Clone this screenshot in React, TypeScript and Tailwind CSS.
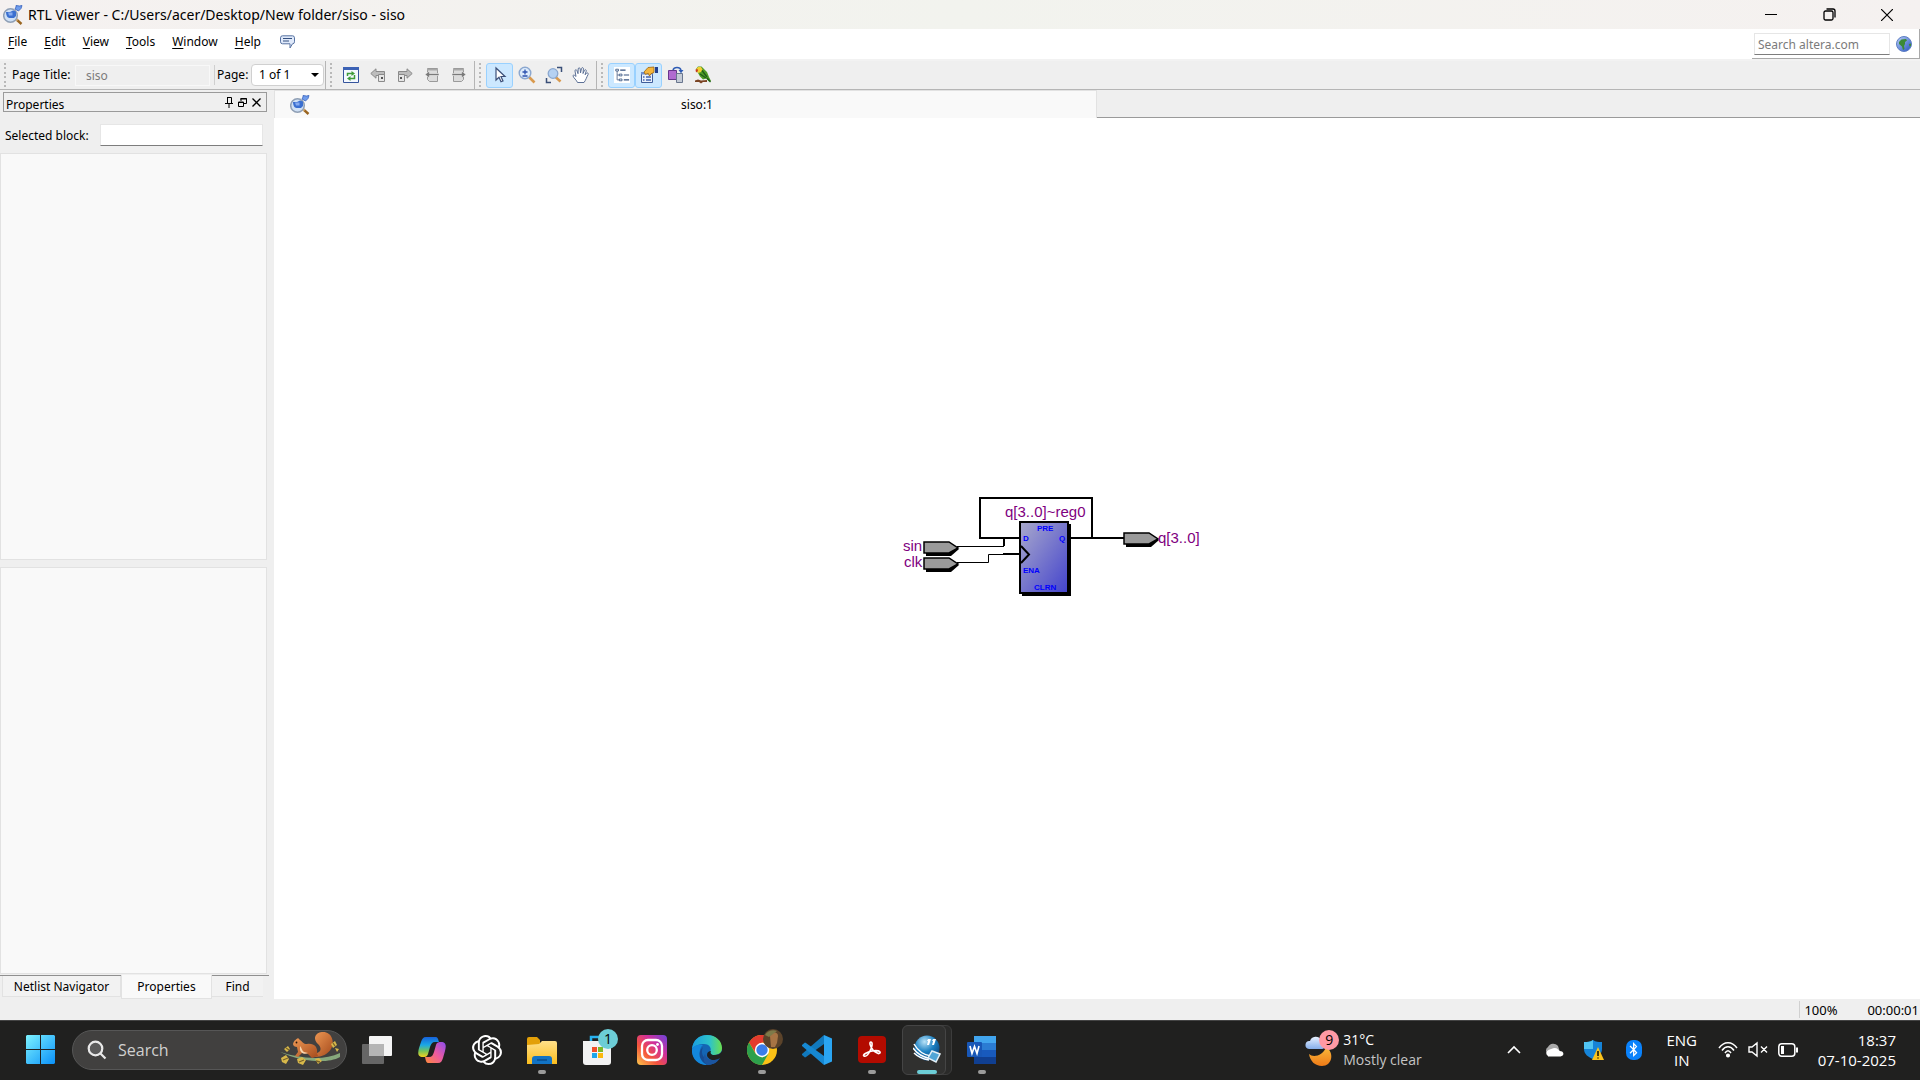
import React, { ReactNode } from "react";
import { SiOpenai } from "react-icons/si";
import { FaBluetoothB } from "react-icons/fa";

const Magnifier = () => (
  <svg width="20" height="20" viewBox="0 0 20 20">
    <path d="M13.500 14.500l5 4.500" stroke="#9a6520" strokeWidth="2.400" />
    <path d="M12 13.500l2.500 2" stroke="#d9b27c" strokeWidth="2" />
    <circle cx="7.500" cy="10.500" r="6.800" fill="#cfe0f5" stroke="#8f9fb5" strokeWidth="1.500" />
    <path d="M3 7h4l3-1.500 3 1V11l-2 2H6.500C4.500 13 3 10 3 7z" fill="#3a6fd0" />
    <path d="M5 7.500h4.500v3H6z" fill="#84aaf0" />
    <path d="M12 4l1-2V.500l3.500.5 2.500-.500-1 3-2.500 2.500z" fill="#6f9cec" stroke="#3560bb" strokeWidth=".8" />
  </svg>
);

const Grip = () => (
  <span className="mx-1 flex h-6 w-[3px] shrink-0 flex-col justify-between" aria-hidden="true">
    {[0, 1, 2, 3, 4, 5].map((i) => (
      <span key={i} className="size-[2px] bg-[#b9b9b9]" />
    ))}
  </span>
);

const ToolButton = ({ label, on, children }: { label: string; on?: boolean; children: ReactNode }) => (
  <button
    aria-label={label}
    className={
      on
        ? "flex h-[25px] w-[27px] items-center justify-center rounded-[3px] border border-[#99d1ff] bg-[#cce8ff]"
        : "flex h-[25px] w-[27px] items-center justify-center"
    }
  >
    {children}
  </button>
);

const Refresh = () => (
  <svg width="16" height="16" viewBox="0 0 16 16">
    <path d="M.5.500h15v15H.5z" fill="#f4f8ff" stroke="#35549c" />
    <path d="M0 0h16v3H0z" fill="#3c62b5" />
    <path d="M4.500 9V6.500H10M11.500 8v3.500H6" fill="none" stroke="#3f9c3b" strokeWidth="1.500" />
    <path d="M8.500 4l3.500 2.500L8.500 9zM7.500 9L4 11.500 7.500 14z" fill="#3f9c3b" />
  </svg>
);
const PageArrow = ({ flip }: { flip?: boolean }) => (
  <svg width="16" height="16" viewBox="0 0 16 16" className={flip ? "-scale-x-100" : ""}>
    <path d="M.8 6.500L6 1.800v2.700h8.500v4H6v2.700z" fill="#bdbdbd" stroke="#8a8a8a" />
    <path d="M8.500 7.500h6v7h-6z" fill="#e6e6e6" stroke="#8a8a8a" />
    <path d="M11 10h2v2h-2z" fill="#555" />
  </svg>
);
const SheetArrow = ({ flip }: { flip?: boolean }) => (
  <svg width="16" height="16" viewBox="0 0 16 16" className={flip ? "-scale-x-100" : ""}>
    <path d="M3.500 1.500h10v13h-8l-2-2z" fill="#dcdcdc" stroke="#9a9a9a" />
    <path d="M3 2h11v1.500H3z" fill="#a8a8a8" />
    <path d="M1 7.500L5.500 4v2.500H15v2H5.500V11z" fill="#7a7a7a" stroke="#efefef" strokeWidth=".6" />
  </svg>
);
const Pointer = () => (
  <svg width="14" height="18" viewBox="0 0 14 18">
    <path d="M3 2v12l3-2.800 2 4.600 2-.9-2-4.400h4z" fill="#fff" stroke="#3c4f78" strokeWidth="1.200" />
  </svg>
);
const ZoomLens = () => (
  <svg width="18" height="18" viewBox="0 0 18 18">
    <path d="M11 11l5.500 5.500" stroke="#d99a4e" strokeWidth="2.600" />
    <circle cx="7" cy="7" r="5.800" fill="#dcebfb" stroke="#8ba7cf" strokeWidth="1.400" />
    <path d="M4.500 6h5M7 3.500v5M4.500 10h5" stroke="#2b50ae" strokeWidth="1.300" />
  </svg>
);
const ZoomFit = () => (
  <svg width="18" height="18" viewBox="0 0 18 18">
    <path d="M10.500 11l5 4.500" stroke="#d99a4e" strokeWidth="2.600" />
    <circle cx="8" cy="7.500" r="4.800" fill="#b5d1f2" stroke="#8ba7cf" strokeWidth="1.300" />
    <path d="M12 1.500h4.500V6M1.500 12v4.500H6" fill="none" stroke="#3a4f78" strokeWidth="1.500" />
  </svg>
);
const Hand = () => (
  <svg width="18" height="18" viewBox="0 0 18 18">
    <path
      d="M5.500 16.500c-.5-2-4.500-5-4.500-6.700 0-1 1.500-1 3 .7L3 5c-.2-1.500 1.500-1.800 2-.3l1 3L6.200 3c0-1.600 1.900-1.600 2 0l.3 4L9.500 2.500c.4-1.400 2-1.100 1.900.4L11 7.500l1.500-3.200c.7-1.200 2.100-.5 1.700.9L13 8.700l1.700-1.500c1-.7 2 .2 1.400 1.300-1.300 2-2.100 5.500-4.100 8z"
      fill="#fff"
      stroke="#5d7196"
    />
  </svg>
);
const Tree = () => (
  <svg width="16" height="16" viewBox="0 0 18 18">
    <path d="M0 0h18v18H0z" fill="#fff" />
    <path d="M3.500 4v10.500H7M3.500 9H7" fill="none" stroke="#5c6f92" />
    <path d="M2 2.500h3v2H2zM6 8h3v2H6zM6 13.500h3v2H6z" fill="#fff" stroke="#34507f" strokeWidth=".9" />
    <path d="M7 3.500h6M11 9h6M11 14.500h6" stroke="#34507f" strokeWidth="1.400" />
  </svg>
);
const HandSheet = () => (
  <svg width="18" height="18" viewBox="0 0 18 18">
    <path d="M1.500 6.500h11v10h-11z" fill="#eaf1fc" stroke="#3f5d9a" />
    <path d="M1 6h12v2.500H1z" fill="#6f8fd0" />
    <path d="M3 11h1.500M6 11h5M3 14h1.500M6 14h5" stroke="#4363ad" strokeWidth="1.300" />
    <path d="M4 6l4-4.500L14 1v5.500l-3 1.200L9.500 10 8.300 7.500l-3 .8z" fill="#f5b53c" stroke="#9b650e" strokeWidth=".8" />
    <path d="M15 1h3v6h-3z" fill="#24408e" />
  </svg>
);
const Swap = () => (
  <svg width="18" height="18" viewBox="0 0 18 18">
    <path d="M1.500 4.500h8v9h-8z" fill="#b16bd0" stroke="#68348c" />
    <path d="M9.500 7.500h6v9h-6z" fill="#c4cbd6" stroke="#69768e" />
    <path d="M6 4c1-3.500 7-3.500 8 0" fill="none" stroke="#2f5cb4" strokeWidth="1.500" />
    <path d="M11.500 4h5L14 7.200z" fill="#2f5cb4" />
  </svg>
);
const Parrot = () => (
  <svg width="18" height="18" viewBox="0 0 18 18">
    <path d="M1 14.500l3-1 3 1 6-.5v2H9l-2 1.500-2-1.500H1z" fill="#7a4424" />
    <path d="M2 3l2-2.500h3.500l2 2L13 6l2 5 2 4-2 .5-3-3-3 1-3-3L4 7z" fill="#4f9b26" />
    <path d="M2 3.500L4 1h3l1.500 2.500L7 6l-3 1-1-2z" fill="#f2cf33" />
    <path d="M1.500 3.500l2-.5.500 2-2 1.500z" fill="#c33b20" />
    <path d="M8 4.500l5 6.500M6 8l6 4M13 12l3.500 4" stroke="#1d5d17" strokeWidth="1.300" />
  </svg>
);
const Globe = () => (
  <svg width="16" height="16" viewBox="0 0 16 16">
    <defs>
      <linearGradient id="gl" x1="0" y1="0" x2="1" y2="1">
        <stop offset="0" stopColor="#bcd3f7" />
        <stop offset="1" stopColor="#2450c0" />
      </linearGradient>
    </defs>
    <circle cx="8" cy="8" r="7.500" fill="url(#gl)" stroke="#5d7ec4" />
    <path d="M3 6l2.500-2.500L10 3l1 1.500L9 6v2l-1 2 .5 3-1.500 1-1-3.500L3 8zM13 8l2-.5V10l-1.500.5z" fill="#3c8a35" />
  </svg>
);

const Menu = ({ text }: { text: string }) => (
  <button className="text-black">
    <span className="underline underline-offset-2">{text[0]}</span>
    {text.slice(1)}
  </button>
);

const Pin = ({ x, y }: { x: number; y: number }) => (
  <g>
    <path d={`M${x + 2} ${y + 3}h24l9 4-8 7h-25z`} fill="#000" />
    <path d={`M${x} ${y}h25l9 6-9 5h-25z`} fill="#9a9a9a" stroke="#000" strokeWidth="1.500" />
  </g>
);

const Schematic = () => (
  <svg width="340" height="130" className="absolute left-[606px] top-[362px]" fontFamily="'Liberation Sans', Arial, sans-serif">
    <defs>
      <linearGradient id="reg" x1="0" y1="0" x2="1" y2="1">
        <stop offset="0" stopColor="#a9a9cc" />
        <stop offset="1" stopColor="#4343cc" />
      </linearGradient>
    </defs>
    <g fill="none" stroke="#000" strokeWidth="2">
      <path d="M140 58h-40V18h112v40M190 58h54M124 58v8M123 74h17" />
      <path d="M77 66.500h47M77 82.500h31.500v-8H124" strokeWidth="1" />
    </g>
    <path d="M142 44h49v72h-49z" />
    <path d="M140 42h48v71h-48z" fill="url(#reg)" stroke="#000" strokeWidth="2" />
    <path d="M141 66l8 8.500-8 8.500" fill="none" stroke="#000" strokeWidth="2" />
    <Pin x={44} y={62} />
    <Pin x={44} y={78} />
    <Pin x={244} y={53} />
    <g fill="#800080" fontSize="15">
      <text x="23" y="71">sin</text>
      <text x="24" y="87">clk</text>
      <text x="125" y="37">q[3..0]~reg0</text>
      <text x="278" y="63">q[3..0]</text>
    </g>
    <g fill="#0000ff" fontSize="8" fontWeight="700">
      <text x="157" y="51">PRE</text>
      <text x="143" y="61">D</text>
      <text x="179" y="61">Q</text>
      <text x="143" y="93">ENA</text>
      <text x="154" y="110">CLRN</text>
    </g>
  </svg>
);

const Task = ({ label, mark, children }: { label: string; mark?: boolean; children: ReactNode }) => (
  <button aria-label={label} className="relative flex h-full w-[54px] grow items-center justify-center">
    {children}
    {mark && <span className="absolute bottom-1 h-1 w-2 rounded-full bg-[#9b9b9b]" />}
  </button>
);

const Squirrel = () => (
  <svg width="64" height="36" viewBox="0 0 64 36">
    <defs>
      <linearGradient id="sq" x1="0" y1="0" x2="1" y2="1">
        <stop offset="0" stopColor="#f09a55" />
        <stop offset="1" stopColor="#a44a1c" />
      </linearGradient>
    </defs>
    <path d="M2 20c16 5 42 10 60 1v4c-12 7-36 4-50-1z" fill="#86a87c" />
    <path d="M35 22c9-1 9-6 5-10-6-6-2-12 5-12 9 0 12 10 8 17-3 5-9 8-16 8z" fill="url(#sq)" />
    <path d="M15 12c1-4 4-5 5-6l2 2c3 2 3 4 7 4 7-1 11 3 10 9l1 3-6 2-4-4-6-1-4 4-3-1 3-4-1-5c-2 0-4-1-4-3z" fill="url(#sq)" />
    <path d="M22 14c2 2 2 5 4 6l4 1c-4 2-7 0-8-3z" fill="#f8d5ae" />
    <circle cx="18.500" cy="10.500" r=".9" fill="#2a1408" />
    <g fill="#d8b84a">
      <path d="M6 17l4-3 2 3-3 3zM3 26l5-3 3 4-3 5-4-2zM19 27l5-2 4 3-3 5-5-2zM37 27l4-1 3 3-4 3zM53 12l4-3 2 4-4 3zM57 16l4 1-2 3z" />
    </g>
    <path d="M5 28l5-2M21 30l5-2M38 29l4 1M8 16l3 2M55 11l2 3" stroke="#77622a" strokeWidth="1.300" />
  </svg>
);

const Defs = () => (
  <svg width="0" height="0" className="absolute" aria-hidden="true">
    <defs>
      <linearGradient id="win" x1="0" y1="0" x2="1" y2="1"><stop offset="0" stopColor="#7df3ff" /><stop offset="1" stopColor="#0a90f8" /></linearGradient>
      <linearGradient id="ig" x1="0" y1="1" x2="1" y2="0"><stop offset="0" stopColor="#fdc84b" /><stop offset=".35" stopColor="#f4553c" /><stop offset=".65" stopColor="#d12f9a" /><stop offset="1" stopColor="#6a45dd" /></linearGradient>
      <linearGradient id="fold" x1="0" y1="0" x2="0" y2="1"><stop offset="0" stopColor="#ffe08a" /><stop offset="1" stopColor="#fbbd1d" /></linearGradient>
      <linearGradient id="edge" x1="0" y1="0" x2="1" y2="0"><stop offset="0" stopColor="#1a9de0" /><stop offset=".6" stopColor="#2ec3c9" /><stop offset="1" stopColor="#6be04e" /></linearGradient>
      <linearGradient id="cpa" x1="0" y1="0" x2="0" y2="1"><stop offset="0" stopColor="#1762dc" /><stop offset=".4" stopColor="#1ba8e6" /><stop offset=".7" stopColor="#74c45a" /><stop offset="1" stopColor="#f6d21e" /></linearGradient>
      <linearGradient id="cpb" x1="1" y1="0" x2="0" y2="1"><stop offset="0" stopColor="#8a4df0" /><stop offset=".5" stopColor="#ec5aa0" /><stop offset="1" stopColor="#ff8a3a" /></linearGradient>
      <linearGradient id="moon" x1="0" y1="0" x2="0" y2="1"><stop offset="0" stopColor="#f9ba3c" /><stop offset="1" stopColor="#ee7a17" /></linearGradient>
      <linearGradient id="cloud" x1="0" y1="0" x2="0" y2="1"><stop offset="0" stopColor="#e6f0ff" /><stop offset="1" stopColor="#86aeea" /></linearGradient>
      <radialGradient id="ball" cx=".4" cy=".25" r=".8"><stop offset="0" stopColor="#b8e2f7" /><stop offset=".5" stopColor="#1b80c2" /><stop offset="1" stopColor="#0a4077" /></radialGradient>
    </defs>
  </svg>
);

const Taskbar = () => (
  <footer className="flex h-[60px] shrink-0 items-center border-t border-[#444] bg-[#20201f] pb-0.5 font-['Open_Sans','Noto_Sans',sans-serif] text-white">
    <Defs />
    <button aria-label="Start" className="ml-[26px]">
      <svg width="29" height="29" viewBox="0 0 29 29">
        <path d="M1 0h13v14H0V1zM15 0h13l1 1v13H15zM0 15h14v14H1l-1-1zM15 15h14v13l-1 1H15z" fill="url(#win)" />
      </svg>
    </button>
    <label className="ml-[17px] flex h-10 w-[275px] items-center overflow-hidden rounded-full border border-[#565656] bg-[#41403f] pl-3.5 pr-1">
      <svg width="20" height="20" viewBox="0 0 20 20" fill="none" stroke="#e8e8e8" strokeWidth="2.200">
        <circle cx="8.500" cy="8.500" r="6.800" fill="#5b5b5b" />
        <path d="M13.500 13.500l5 5" />
      </svg>
      <input aria-label="Search" placeholder="Search" className="ml-[11px] w-0 grow bg-transparent text-base outline-none placeholder:text-[#d0d0d0]" />
      <Squirrel />
    </label>
    <nav className="ml-0.5 flex h-full w-[660px]">
      <Task label="Task view">
        <svg width="30" height="28" viewBox="0 0 30 28">
          <rect x="7" width="23" height="20" rx="1" fill="#f4f4f4" />
          <rect y="8" width="22" height="20" rx="1" fill="#666" />
          <path d="M7 8h15v12H7z" fill="#b5b5b5" />
        </svg>
      </Task>
      <Task label="Copilot">
        <svg width="28" height="26" viewBox="0 0 28 26">
          <path d="M8 0h9c3 0 3 2 4 5h-4c-3 0-4 2-5 5l-2 7c-1 3-3 3-5 3-6 0-5-5-4-9l2-6c1-3 2-5 5-5z" fill="url(#cpa)" />
          <path d="M20 26h-9c-3 0-3-2-4-6h4c3 0 4-2 5-5l2-7c1-3 3-3 5-3 6 0 5 5 4 9l-2 7c-1 3-2 5-5 5z" fill="url(#cpb)" />
        </svg>
      </Task>
      <Task label="ChatGPT"><SiOpenai size={30} color="#fff" /></Task>
      <Task label="File Explorer" mark>
        <svg width="30" height="28" viewBox="0 0 30 28">
          <path d="M0 3a2 2 0 012-2h8l3 3v6H0z" fill="#e3a008" />
          <path d="M0 9l12-1 3-3h13a2 2 0 012 2v21H0z" fill="url(#fold)" />
          <path d="M5 28v-5a3 3 0 013-3h14a3 3 0 013 3v5z" fill="#1273c4" />
          <path d="M10 24h10" stroke="#0a4c8c" strokeWidth="1.500" />
        </svg>
      </Task>
      <Task label="Microsoft Store">
        <svg width="28" height="30" viewBox="0 0 28 30">
          <path d="M8 7V2h12v5" fill="none" stroke="#27b1ef" strokeWidth="2.500" />
          <path d="M0 6h28v21a3 3 0 01-3 3H3a3 3 0 01-3-3z" fill="#f2f2f2" />
          <path d="M9 12h5v5H9z" fill="#f1502a" /><path d="M15 12h5v5h-5z" fill="#7db928" />
          <path d="M9 18h5v5H9z" fill="#1ca6ec" /><path d="M15 18h5v5h-5z" fill="#fbb80c" />
        </svg>
        <span className="absolute left-[29px] top-[8px] flex size-5 items-center justify-center rounded-full bg-[#6ccdd6] text-sm text-black">1</span>
      </Task>
      <Task label="Instagram">
        <svg width="30" height="30" viewBox="0 0 30 30">
          <rect width="30" height="30" rx="4" fill="url(#ig)" />
          <g fill="none" stroke="#fff" strokeWidth="2.300"><rect x="5" y="5" width="20" height="20" rx="6" /><circle cx="15" cy="15" r="4.800" /></g>
          <circle cx="20.500" cy="9.500" r="1.400" fill="#fff" />
        </svg>
      </Task>
      <Task label="Edge">
        <svg width="30" height="30" viewBox="0 0 30 30">
          <circle cx="15" cy="15" r="15" fill="#1465b4" />
          <path d="M0 14C1 5 7 0 15 0c9 0 15 6 15 13 0 5-4 7-8 7-3 0-5-1-4-3 2-3 0-8-6-8-5 0-10 2-12 5z" fill="url(#edge)" />
          <path d="M0 14c2-4 7-5 11-4-4 3-5 11 1 17 2 2 4 3 5 3C7 31-1 24 0 14z" fill="#1387dc" />
          <path d="M11 12c-4 9 4 15 11 13l5-1c-3 4-7 6-12 6-8-4-10-13-4-18z" fill="#164b93" />
          <path d="M19 16c-1 2 0 4 3 4 4 0 6-1 8-4v8l-2 1c-8 2-13-2-13-5 0-3 2-4 4-4z" fill="#20201f" />
          <path d="M13 19c1 6 8 8 15 4-3 5-8 7-13 7-4-3-4-8-2-11z" fill="#1b559f" />
        </svg>
      </Task>
      <Task label="Chrome" mark>
        <svg width="30" height="30" viewBox="0 0 30 30">
          <circle cx="15" cy="15" r="15" fill="#fbc116" />
          <path d="M2 7.500A15 15 0 0128 7.500H15L9 18.500z" fill="#e33b2e" />
          <path d="M2 7.500A15 15 0 0015 30l6.500-11.500-6.500 4-6.500-4z" fill="#2da04c" />
          <circle cx="15" cy="15" r="7.200" fill="#fff" /><circle cx="15" cy="15" r="5.700" fill="#3b7de9" />
        </svg>
        <svg width="20" height="20" viewBox="0 0 20 20" className="absolute left-[29px] top-[8px]">
          <circle cx="10" cy="10" r="10" fill="#5b432a" /><path d="M7 7c0-5 8-5 8 0l-1 7-2 4H8z" fill="#a77444" /><path d="M2 6c2-4 8-6 12-4L6 8z" fill="#7d7a49" />
        </svg>
      </Task>
      <Task label="Visual Studio Code">
        <svg width="30" height="30" viewBox="0 0 30 30">
          <path d="M22 0v9L4 22l-1 .5-3-2.500v-1L22 0z" fill="#1179bd" />
          <path d="M22 30v-9L4 8l-1-.5L0 10v1z" fill="#1688d2" />
          <path d="M22 0l8 3.500v23L22 30z" fill="#2aa5f2" />
        </svg>
      </Task>
      <Task label="Acrobat" mark>
        <svg width="28" height="27" viewBox="0 0 28 27">
          <rect width="28" height="27" rx="4" fill="#b30b00" />
          <path d="M6 20c-2-1 3-4 8-5 5-1 9 0 8 2-1 1-4 0-7-3-3-4-4-8-2-8s1 6-1 9c-2 4-4 6-6 5z" fill="none" stroke="#fff" strokeWidth="1.600" />
        </svg>
      </Task>
      <Task label="Quartus">
        <span className="absolute right-[2px] top-[4px] h-[50px] w-8 rounded-md border border-[#3c3c3c] bg-[#2a2a29]" />
        <span className="absolute left-[3px] top-[4px] h-[50px] w-11 rounded-md border border-[#454545] bg-[#30302f]" />
        <svg width="28" height="29" viewBox="0 0 28 29" className="relative">
          <circle cx="14" cy="13" r="12.500" fill="url(#ball)" />
          <path d="M1 9c4 7 9 11 17 12M0 13c4 6 9 9 17 10.500M1 18c4 4 9 6 15 7" fill="none" stroke="#fff" strokeWidth="1.500" />
          <path d="M19 16l8 3-4 8-8-4z" fill="#51a5d6" stroke="#e2eef5" strokeWidth="1.500" />
          <path d="M15 4h3l-2 6h-2l1-4h-1zM20 4h3l-2 6h-2l1-4h-1z" fill="#fff" />
        </svg>
        <span className="absolute bottom-1 h-1 w-5 rounded-full bg-[#6ccdd6]" />
      </Task>
      <Task label="Word" mark>
        <svg width="29" height="28" viewBox="0 0 29 28">
          <path d="M7 0h22v7H7z" fill="#41a5ee" /><path d="M7 7h22v7H7z" fill="#2b7cd3" /><path d="M7 14h22v7H7z" fill="#185abd" /><path d="M7 21h22v7H7z" fill="#103f91" />
          <rect y="6" width="15" height="15" rx="1" fill="#1857b7" />
          <path d="M3 10l2 7.500 2.500-7 2.500 7 2-7.500" fill="none" stroke="#fff" strokeWidth="1.600" />
        </svg>
      </Task>
    </nav>
    <button className="ml-auto mr-[72px] flex items-center text-left text-[14px] leading-5">
      <span className="relative mr-0.5 size-9">
        <svg width="36" height="36" viewBox="0 0 36 36">
          <path d="M4 22c4 4 14 2 17-7 9 6 6 19-4 19-7 0-12-5-13-12z" fill="url(#moon)" />
          <path d="M4 17a4 4 0 011-8 6 6 0 0111-1c5 1 5 9 1 9z" fill="url(#cloud)" />
        </svg>
        <span className="absolute right-0.5 -top-0.5 flex size-5 items-center justify-center rounded-full bg-[#ff99a4] text-sm text-black">9</span>
      </span>
      <span>
        <span className="block">31°C</span>
        <span className="block text-[#c5c5c5]">Mostly clear</span>
      </span>
    </button>
    <div className="flex h-full items-center">
      <button aria-label="Show hidden icons" className="flex w-10 justify-center">
        <svg width="14" height="9" viewBox="0 0 14 9" fill="none" stroke="#fff" strokeWidth="1.600"><path d="M1 8l6-6 6 6" /></svg>
      </button>
      <button aria-label="OneDrive" className="flex w-10 justify-center">
        <svg width="20" height="14" viewBox="0 0 20 14"><path d="M4 11a4 4 0 010-7 6 6 0 0110-1l2 6z" fill="#a9a9a9" /><path d="M4 13a4 3.500 0 01.5-6c3-1 4-2 6-2 3 0 4 2 5 3 5 0 5 5 1 5.500H4z" fill="#fff" /></svg>
      </button>
      <button aria-label="Security" className="flex w-10 justify-center">
        <svg width="20" height="20" viewBox="0 0 20 20"><path d="M9 0c3 2 5 2 9 2v7c0 5-4 8-9 10C4 17 0 14 0 9V2c4 0 6 0 9-2z" fill="#1684d8" /><path d="M9 0v9H0V2c4 0 6 0 9-2z" fill="#50c4f2" /><path d="M14 7l6 13H8z" fill="#fbc31c" /><path d="M14 11v5M14 17.500v1" stroke="#000" strokeWidth="1.400" /></svg>
      </button>
      <button aria-label="Bluetooth" className="flex w-10 justify-center">
        <span className="flex h-5 w-4 items-center justify-center rounded-[7px] bg-[#0a82fb]"><FaBluetoothB size={15} /></span>
      </button>
      <button className="w-[56px] text-center text-[15px] leading-5">ENG<br />IN</button>
      <button aria-label="Network, sound and battery" className="ml-2 flex items-center gap-2.5">
        <svg width="20" height="17" viewBox="0 0 20 17" fill="none" stroke="#fff" strokeWidth="1.500"><path d="M1 7c5-7 13-7 18 0M4 9.500c3.500-5 8.500-5 12 0M7 12c2-3 4-3 6 0" /><circle cx="10" cy="14.500" r="1.300" fill="#fff" /></svg>
        <svg width="20" height="17" viewBox="0 0 20 17" fill="none" stroke="#fff" strokeWidth="1.400"><path d="M1 6h3l5-4v13l-5-4H1zM13 5.500l6 6M19 5.500l-6 6" /></svg>
        <svg width="20" height="14" viewBox="0 0 20 14"><rect x=".8" y=".8" width="16" height="12.400" rx="3" fill="none" stroke="#fff" strokeWidth="1.500" /><path d="M3 3h3v8H3zM18 4.500h2v5h-2z" fill="#fff" /></svg>
      </button>
      <button className="ml-5 mr-6 text-right text-[15px] leading-5">18:37<br />07-10-2025</button>
    </div>
  </footer>
);

export default function App() {
  return (
    <div className="flex h-screen flex-col overflow-hidden bg-[#efefef] font-['Noto_Sans',sans-serif] text-[12px] leading-4 text-black">
      <header className="flex h-[29px] shrink-0 items-center bg-gradient-to-r from-[#f5f1f0] via-[#f2f3ee] to-[#f5f1f0] pl-[3px]">
        <Magnifier />
        <h1 className="ml-[5px] text-[14px]">RTL Viewer - C:/Users/acer/Desktop/New folder/siso - siso</h1>
        <div className="ml-auto flex h-full">
          <button aria-label="Minimize" className="flex w-[58px] items-center justify-center">
            <svg width="12" height="12" stroke="#000"><path d="M0 5.500h12" /></svg>
          </button>
          <button aria-label="Restore" className="flex w-[58px] items-center justify-center">
            <svg width="13" height="13" fill="none" stroke="#000" strokeWidth="1.300"><rect x="1" y="3" width="9" height="9" rx="1.500" /><path d="M3.500 1H10a2 2 0 012 2v6.500" /></svg>
          </button>
          <button aria-label="Close" className="mr-1 flex w-[58px] items-center justify-center">
            <svg width="12" height="12" stroke="#000" strokeWidth="1.200"><path d="M0 0l12 12M12 0L0 12" /></svg>
          </button>
        </div>
      </header>

      <div className="flex h-8 shrink-0 border-b-2 border-[#f2f2f2] bg-white pl-2">
        <nav className="flex h-[26px] items-center gap-[17px]">
          {["File", "Edit", "View", "Tools", "Window", "Help"].map((t) => (
            <Menu key={t} text={t} />
          ))}
          <button aria-label="Feedback" className="ml-0.5">
            <svg width="15" height="14" viewBox="0 0 15 14"><path d="M2.500.800h10a2 2 0 012 2v4a2 2 0 01-2 2L10 13V8.800H2.500a2 2 0 01-2-2v-4a2 2 0 012-2z" fill="#dfe9fa" stroke="#5873a2" /><path d="M3 3.500h9M3 6h6" stroke="#34507f" /></svg>
          </button>
        </nav>
        <div className="ml-auto flex h-[30px] items-center gap-1.5 border-b border-r border-[#a9a9a9] pl-0.5 pr-[7px]">
          <input aria-label="Search altera.com" placeholder="Search altera.com" className="h-[22px] w-[136px] border border-[#e6e6e6] border-b-[#7d7d7d] px-[3px] pt-px outline-none placeholder:text-[#7b7b7b]" />
          <button aria-label="Go"><Globe /></button>
        </div>
      </div>

      <div className="flex h-[29px] shrink-0 items-center border-b border-[#b5b5b5]">
        <Grip />
        <label className="flex items-center">
          <span className="w-16 pl-px">Page Title:</span>
          <input disabled value="siso" className="h-[21px] w-[135px] border border-[#f8f8f8] px-2.5 text-[#7b7b7b]" />
        </label>
        <span className="ml-1 mr-[2px] h-5 w-px bg-[#cfcfcf]" />
        <label className="flex items-center">
          <span className="w-[34px]">Page:</span>
          <span className="relative flex items-center">
            <select className="h-[22px] w-[73px] appearance-none rounded border border-[#d0d0d0] bg-white pl-[7px]">
              <option>1 of 1</option>
            </select>
            <span className="pointer-events-none absolute right-[5px] border-x-4 border-t-4 border-x-transparent border-t-black" />
          </span>
        </label>
        <span className="ml-px h-full w-px bg-[#b5b5b5]" />
        <Grip />
        <div className="flex items-center">
          <ToolButton label="Refresh"><Refresh /></ToolButton>
          <ToolButton label="Back"><PageArrow /></ToolButton>
          <ToolButton label="Forward"><PageArrow flip /></ToolButton>
          <ToolButton label="Previous page"><SheetArrow /></ToolButton>
          <ToolButton label="Next page"><SheetArrow flip /></ToolButton>
        </div>
        <span className="ml-0.5 h-full w-px bg-[#b5b5b5]" />
        <Grip />
        <div className="flex items-center">
          <ToolButton label="Select" on><Pointer /></ToolButton>
          <ToolButton label="Zoom"><ZoomLens /></ToolButton>
          <ToolButton label="Fit"><ZoomFit /></ToolButton>
          <ToolButton label="Pan"><Hand /></ToolButton>
        </div>
        <span className="ml-0.5 h-full w-px bg-[#b5b5b5]" />
        <Grip />
        <div className="flex items-center">
          <ToolButton label="Netlist Navigator" on><Tree /></ToolButton>
          <ToolButton label="Properties" on><HandSheet /></ToolButton>
          <ToolButton label="Swap"><Swap /></ToolButton>
          <ToolButton label="Bird's eye"><Parrot /></ToolButton>
        </div>
      </div>

      <main className="flex min-h-0 grow">
        <aside className="flex w-[274px] shrink-0 flex-col">
          <div className="ml-[3px] mr-[7px] mt-[2px] flex h-5 shrink-0 items-center border border-[#9a9a9a] pl-0.5 pr-[5px]">
            <h2 className="mt-1.5">Properties</h2>
            <button aria-label="Pin" className="ml-auto">
              <svg width="8" height="11" viewBox="0 0 8 11" fill="none" stroke="#000"><path d="M2 .500h4.500v6M2.500 0v6M0 6.500h8M4 7v4" /></svg>
            </button>
            <button aria-label="Float" className="ml-[5px]">
              <svg width="9" height="9" viewBox="0 0 9 9" fill="none" stroke="#000"><path d="M3 3V.500h5.500v5H6M2 1h7M.5 4h5v4.500h-5zM0 4.500h6" /></svg>
            </button>
            <button aria-label="Close panel" className="ml-[5px]">
              <svg width="9" height="9" viewBox="0 0 9 9" stroke="#000" strokeWidth="1.300"><path d="M.5.500l8 8M8.500.500l-8 8" /></svg>
            </button>
          </div>
          <label className="mt-3 flex h-[22px] shrink-0 items-center pl-[5px]">
            <span className="w-[95px] pt-px">Selected block:</span>
            <input className="h-[22px] w-[163px] border border-[#e6e6e6] border-b-[#7d7d7d] bg-white" />
          </label>
          <div className="mr-[7px] mt-[7px] min-h-0 grow basis-0 border border-[#e2e2e2] bg-[#f9f9f9]" />
          <div className="mr-[7px] mt-[7px] min-h-0 grow basis-0 border border-[#e2e2e2] bg-[#f9f9f9]" />
          <div role="tablist" className="mr-[5px] mt-px flex h-6 shrink-0 items-start border-t border-[#8f8f8f] pl-[2px]">
            <button role="tab" className="h-[21px] w-[119px] border border-t-0 border-[#e2e2e2] bg-[#f2f2f2] pt-px">Netlist Navigator</button>
            <button role="tab" aria-selected="true" className="-mt-px h-6 w-[91px] border border-t-0 border-[#e2e2e2] bg-[#f9f9f9] pt-px">Properties</button>
            <button role="tab" className="h-[21px] w-[51px] border-b border-[#e2e2e2] bg-[#f2f2f2] pt-px">Find</button>
          </div>
        </aside>
        <section className="flex min-w-0 grow flex-col">
          <div role="tablist" className="flex h-7 shrink-0">
            <button role="tab" aria-selected="true" className="flex w-1/2 items-center border border-b-0 border-[#e2e2e2] bg-[#f9f9f9] pl-[15px]">
              <Magnifier />
              <span className="grow pr-3 text-center">siso:1</span>
            </button>
            <div className="grow border-b border-[#9a9a9a]" />
          </div>
          <div className="relative min-h-0 grow overflow-hidden bg-white"><Schematic /></div>
        </section>
      </main>

      <div className="flex h-[21px] shrink-0 items-center justify-end pr-px text-[13px]">
        <span className="mr-1 h-[17px] w-px bg-[#d0d0d0]" />
        <span className="w-[63px]">100%</span>
        <span>00:00:01</span>
      </div>
      <Taskbar />
    </div>
  );
}
